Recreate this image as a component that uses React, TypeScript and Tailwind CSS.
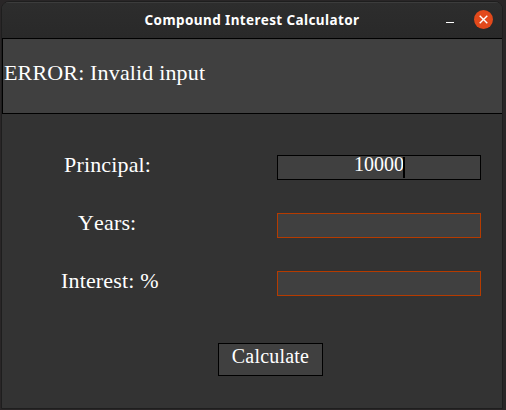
import React from "react";

const serif = "font-['Liberation_Serif','Times_New_Roman',serif]";

function TitleBar() {
  return (
    <header className="flex h-[36px] shrink-0 items-center border-t border-[#3c3c3c] bg-gradient-to-b from-[#2d2d2d] to-[#292929]">
      <div className="w-[84px]" />
      <h1 className="w-[332px] pb-[2px] text-center font-['Noto_Sans','Open_Sans',sans-serif] text-[13.5px] font-bold leading-[20px] tracking-[0.4px] whitespace-nowrap text-white">
        Compound Interest Calculator
      </h1>
      <div className="ml-[28px] h-px w-[8px] translate-y-[2px] bg-white" />
      <button className="mb-[2px] ml-[20px] flex size-[19px] items-center justify-center rounded-full bg-[#e2491b]" aria-label="Close">
        <svg width="9" height="9" viewBox="0 0 9 9" stroke="white" strokeWidth="1.4">
          <path d="M0.7 0.7L8.3 8.3M8.3 0.7L0.7 8.3" />
        </svg>
      </button>
    </header>
  );
}

type FieldProps = {
  label: string;
  labelClass: string;
  value?: string;
};

function Field({ label, labelClass, value }: FieldProps) {
  return (
    <div className="flex h-[25px] items-center">
      <label className={`w-[275px] pb-[6px] text-[22px] leading-[25px] tracking-[0.16px] [font-kerning:none] whitespace-pre ${labelClass}`}>{label}</label>
      <div
        className={`flex h-[25px] w-[204px] justify-center border bg-[#404040] ${
          value ? "border-black" : "border-[#b53b00]"
        }`}
      >
        {value && (
          <div className="flex pl-px">
            <span className="text-[20px] leading-[17px]">{value}</span>
            <span className="-ml-px mt-px h-[21px] w-[2px] bg-black" />
          </div>
        )}
      </div>
    </div>
  );
}

export default function App() {
  return (
    <div className="h-[410px] w-[506px] bg-[#292627] pt-px pl-px">
      <div className="flex h-[408px] w-[502px] flex-col overflow-hidden rounded-t-[8px] border border-[#1e1e1e] bg-[#333333]">
        <TitleBar />
        <main className={`flex flex-col text-white ${serif}`}>
          <div className="flex h-[76px] items-center border-y border-l border-black bg-[#404040] pb-[7px] pl-px text-[22px] tracking-[0.16px]">
            ERROR: Invalid input
          </div>
          <div className="mt-[41px] flex flex-col gap-[33px]">
            <Field label="Principal:" labelClass="pl-[62px]" value="10000" />
            <Field label="Years:" labelClass="pl-[76px]" />
            <Field label="Interest: %" labelClass="pl-[59px]" />
          </div>
          <button className="mt-[47px] ml-[216px] flex h-[33px] w-[105px] justify-center border border-black bg-[#404040] text-[20px] leading-[25px] tracking-[0.2px]">
            Calculate
          </button>
        </main>
      </div>
    </div>
  );
}
